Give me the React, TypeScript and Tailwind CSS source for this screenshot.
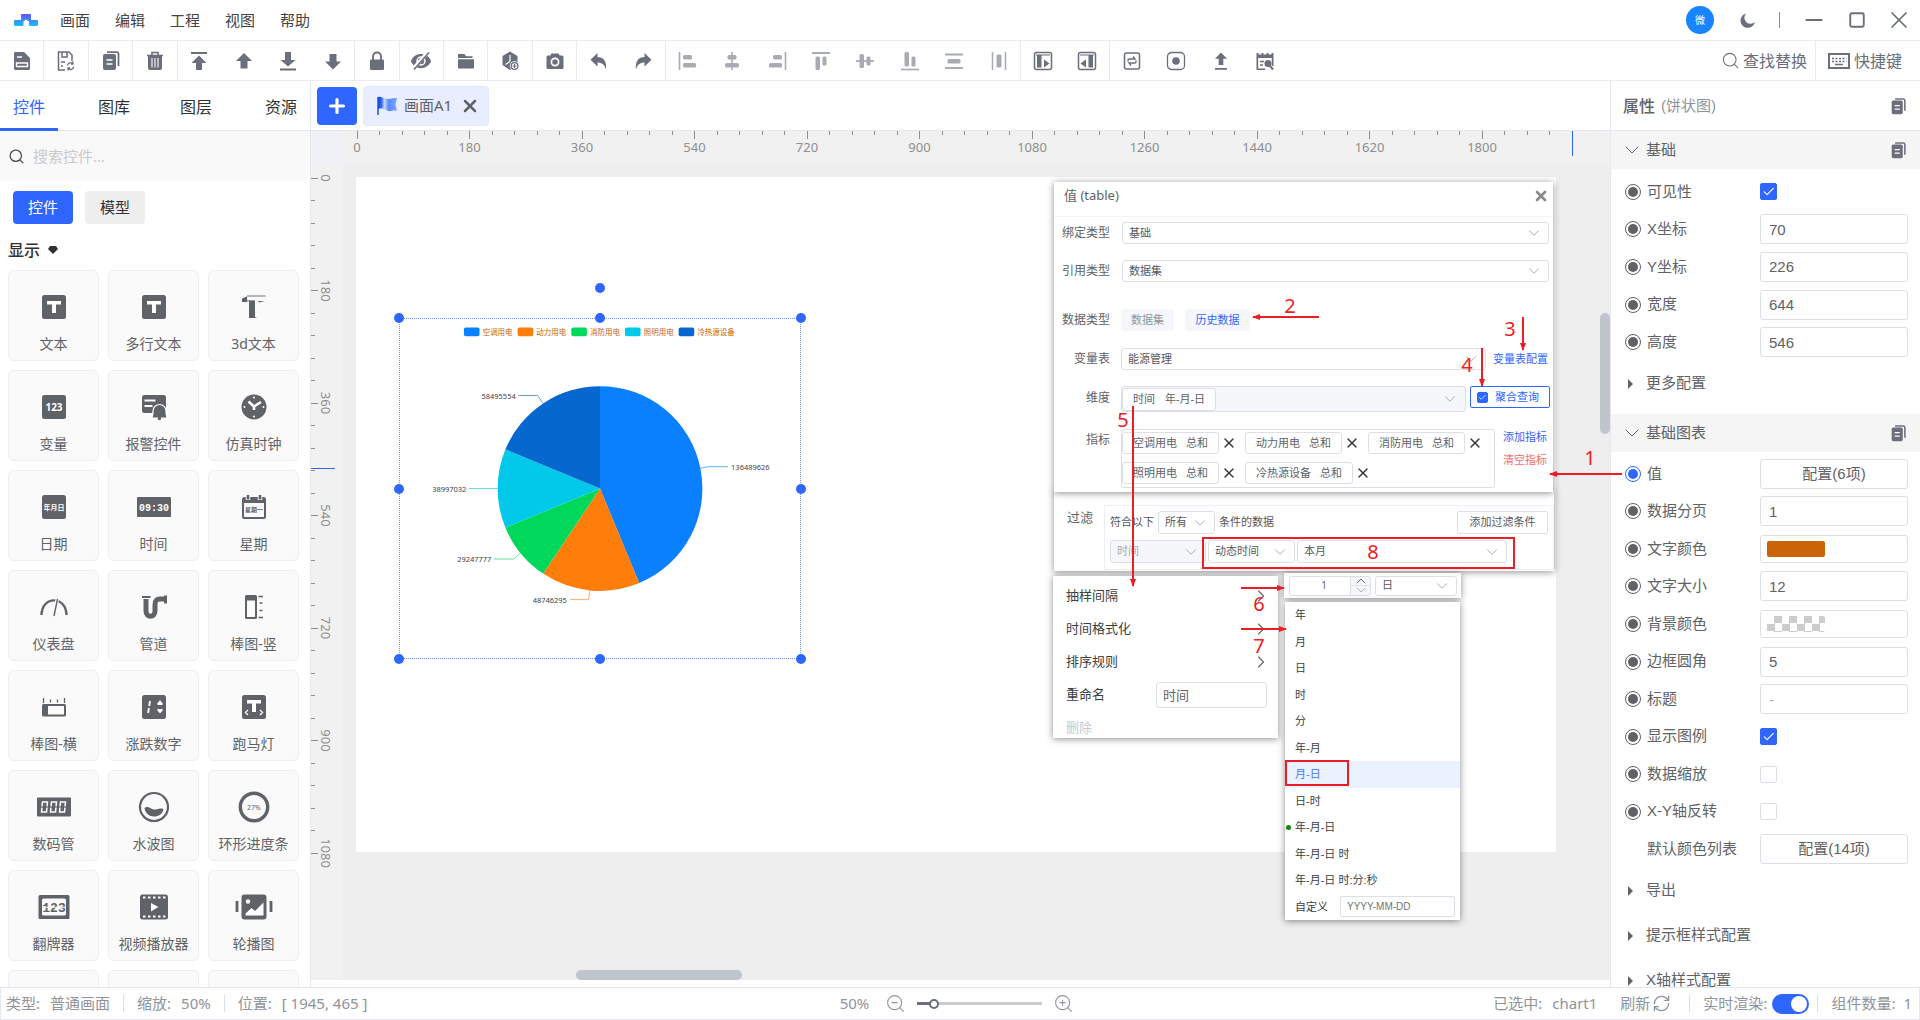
import type { ReactNode } from "react";
import { ChevronDown, ChevronRight, ChevronUp, Check, Minus, Plus, RefreshCw, Search, Square, X, ZoomIn, ZoomOut } from "lucide-react";

const MENUS = ["画面", "编辑", "工程", "视图", "帮助"];

interface Tool {
  name: string;
  icon: ReactNode;
  divider?: boolean;
  dim?: boolean;
}

const copyShape = (
  <>
    <path d="M6 1.2h9.5a2 2 0 0 1 2 2V15" fill="none" stroke="currentColor" strokeWidth="1.8" />
    <rect x="2" y="3" width="13" height="16" rx="2" />
    <path d="M5.500 9h6M5.500 13h6" stroke="#fff" strokeWidth="1.4" />
  </>
);

const TOOLS: Tool[] = [
  {
    name: "保存", divider: true,
    icon: <><path d="M3 1h9l6 6v10.5a1.5 1.5 0 0 1-1.5 1.5h-13A1.5 1.5 0 0 1 2 17.5V2a1 1 0 0 1 1-1z" /><path d="M5 6h5M4.500 12h11v3.500h-11z" stroke="#fff" strokeWidth="1.4" fill="none" /></>,
  },
  {
    name: "另存", divider: true,
    icon: <><path d="M9 19H2.500V1H13l3 3v6M6 1v5h5V1M5 11h4M5 15h2" fill="none" stroke="currentColor" strokeWidth="1.5" /><path d="M11.500 14.500a3 3 0 0 1 5.500-1.500M17.500 15.500a3 3 0 0 1-5.500 1.700M17 10.500V13h-2M12 19.500V17h2" fill="none" stroke="currentColor" strokeWidth="1.3" /></>,
  },
  { name: "复制", divider: true, icon: copyShape },
  {
    name: "删除", divider: true,
    icon: <><path d="M2 4.500h16M7 4V1.500h6V4" fill="none" stroke="currentColor" strokeWidth="1.6" /><path d="M3 4.500h14V17a2 2 0 0 1-2 2H5a2 2 0 0 1-2-2z" /><path d="M7 7v9.500M10 7v9.500M13 7v9.500" stroke="#fff" strokeWidth="1.1" /></>,
  },
  { name: "置顶", icon: <path d="M2 1h16v2H2zM10 4.500l7.500 7.500H13v7H7v-7H2.500z" /> },
  { name: "上移", icon: <path d="M10 2l8 8h-4.500v7.500h-7V10H2z" /> },
  { name: "置底", icon: <path d="M2 17.500h16v2H2zM10 15.500L2.500 9H7V1h6v8h4.500z" /> },
  { name: "下移", divider: true, icon: <path d="M10 18.500l-8-8h4.500V3h7v7.500H18z" /> },
  {
    name: "锁定", divider: true,
    icon: <><path d="M6 9V5.500a4 4 0 0 1 8 0V9" fill="none" stroke="currentColor" strokeWidth="1.9" /><rect x="3" y="8.500" width="14" height="10.500" rx="1.3" /></>,
  },
  {
    name: "隐藏", divider: true,
    icon: <><path d="M0 10C3 0.500 17 0.500 20 10 17 19.500 3 19.500 0 10z" /><circle cx="10" cy="10" r="4" fill="none" stroke="#fff" strokeWidth="1.5" /><path d="M2.500 17.500L17 1" stroke="#fff" strokeWidth="3.600" /><path d="M3 18.500L18 1.500" stroke="currentColor" strokeWidth="1.600" /></>,
  },
  { name: "文件夹", divider: true, icon: <path d="M2 3h6.500L10 5.300h6.500V7H2zM2 8.300h16v8.200a1 1 0 0 1-1 1H3a1 1 0 0 1-1-1z" /> },
  {
    name: "组件", divider: true,
    icon: <><path d="M10 0.500l7.500 4.500v9L10 19l-7.500-5V5z" /><path d="M10 4v6.500M10 10.500l-4.500 3" stroke="#fff" strokeWidth="1.2" /><circle cx="14.500" cy="15" r="4.800" fill="#fff" /><circle cx="14.500" cy="15" r="3.400" fill="none" stroke="currentColor" strokeWidth="1.3" /><path d="M14.500 13v4M12.500 15h4" stroke="currentColor" strokeWidth="1.2" /></>,
  },
  {
    name: "截图", divider: true,
    icon: <><path d="M6.500 2.500h7l1.200 2H17A1.500 1.500 0 0 1 18.500 6v10.500A1.500 1.500 0 0 1 17 18H3a1.500 1.500 0 0 1-1.500-1.500V6A1.500 1.500 0 0 1 3 4.500h2.300z" /><circle cx="10" cy="11" r="3.600" fill="none" stroke="#fff" strokeWidth="1.7" /></>,
  },
  { name: "撤销", icon: <path d="M8.500 2v4c6 0 9.500 4.500 8.500 12.500-1.500-5-4-7-8.500-7v4L1.500 8.700z" /> },
  { name: "重做", divider: true, icon: <path d="M11.500 2v4C5.500 6 2 10.500 3 18.500c1.500-5 4-7 8.500-7v4l7-6.800z" /> },
  { name: "左对齐", dim: true, icon: <><path d="M1.500 1v18" stroke="currentColor" strokeWidth="1.6" /><rect x="5" y="4" width="9" height="4.500" rx="1.5" /><rect x="5" y="12" width="13" height="4.500" rx="1.5" /></> },
  { name: "水平居中", dim: true, icon: <><path d="M10 1v18" stroke="currentColor" strokeWidth="1.6" /><rect x="5.500" y="4" width="9" height="4.500" rx="1.5" /><rect x="3" y="12" width="14" height="4.500" rx="1.5" /></> },
  { name: "右对齐", dim: true, icon: <><path d="M18.500 1v18" stroke="currentColor" strokeWidth="1.6" /><rect x="6" y="4" width="9" height="4.500" rx="1.5" /><rect x="2" y="12" width="13" height="4.500" rx="1.5" /></> },
  { name: "顶对齐", dim: true, icon: <><path d="M1 2h18" stroke="currentColor" strokeWidth="2" /><rect x="4.500" y="5.500" width="4.500" height="13.500" rx="1.5" /><rect x="11.500" y="5.500" width="4" height="9" rx="1.5" /></> },
  { name: "垂直居中", dim: true, icon: <><path d="M1 10h18" stroke="currentColor" strokeWidth="1.7" /><rect x="4.500" y="3" width="4.500" height="14" rx="1.5" /><rect x="11.500" y="5.500" width="4" height="9" rx="1.5" /></> },
  { name: "底对齐", dim: true, icon: <><path d="M1 18.500h18" stroke="currentColor" strokeWidth="1.7" /><rect x="4.500" y="1" width="4.500" height="14.500" rx="1.5" /><rect x="11.500" y="5.500" width="4" height="10" rx="1.5" /></> },
  { name: "垂直等距", dim: true, icon: <><path d="M1 3.500h18M1 17h18" stroke="currentColor" strokeWidth="1.8" /><rect x="3.500" y="8" width="13" height="4.500" rx="1.5" /></> },
  { name: "水平等距", dim: true, divider: true, icon: <><path d="M3.500 1v18M16.500 1v18" stroke="currentColor" strokeWidth="1.5" /><rect x="7.500" y="3.500" width="5" height="13" rx="1.5" /></> },
  { name: "左面板", icon: <><rect x="1.500" y="1.500" width="17" height="17" rx="2" fill="none" stroke="currentColor" strokeWidth="1.5" /><path d="M3 4h14" stroke="currentColor" /><path d="M4 4h4.500v12.500H4zM11 8.500l5.500 4-5.500 4z" /></> },
  { name: "右面板", divider: true, icon: <><rect x="1.500" y="1.500" width="17" height="17" rx="2" fill="none" stroke="currentColor" strokeWidth="1.5" /><path d="M3 4h14" stroke="currentColor" /><path d="M11.500 4H16v12.500h-4.500zM9 8.500l-5.500 4 5.500 4z" /></> },
  { name: "刷新页面", icon: <><rect x="2.500" y="2" width="15" height="16" rx="2" fill="none" stroke="currentColor" strokeWidth="1.5" /><path d="M6 10.500V9a1 1 0 0 1 1-1h6l-2-2.500M14 9.500V11a1 1 0 0 1-1 1H7l2 2.500" fill="none" stroke="currentColor" strokeWidth="1.4" /></> },
  { name: "录制", icon: <><rect x="1.500" y="1.500" width="17" height="17" rx="4" fill="none" stroke="currentColor" strokeWidth="1.3" /><circle cx="10" cy="10" r="3.800" /></> },
  { name: "上传", icon: <path d="M4 17h12v1.700H4zM10 1.500l6 6.300h-3.700V14H7.700V7.800H4z" /> },
  { name: "日志", icon: <><path d="M1.500 2h2v1.500h3V2h2v1.500h3V2h2v1.500h3V2h2v13h-1.700V7H3.200v10.500h7V19H1.500z" /><path d="M5 10.500h4M5 14h3" stroke="currentColor" strokeWidth="1.3" /><circle cx="13" cy="12.500" r="3.500" /><path d="M15 15l3 3.500" stroke="currentColor" strokeWidth="2" /></> },
];

const fg = "#5f6266";
const box = <rect x="8" y="4" width="24" height="24" rx="2.500" />;
const letterT = <path d="M13 10h14v3.500h-5V22h-4v-8.500h-5z" fill="#fff" />;

const WIDGETS: { name: string; icon: ReactNode }[] = [
  { name: "文本", icon: <>{box}{letterT}</> },
  { name: "多行文本", icon: <>{box}{letterT}</> },
  { name: "3d文本", icon: <><path d="M8 7.500l5-2V11H8zM15 10h6v16l2 1h-8z" /><path d="M13 5h18.500M13 9.800h8" stroke={fg} strokeWidth="0.900" fill="none" /><path d="M24 10h7l-6 1.500z" /></> },
  { name: "变量", icon: <>{box}<text x="20" y="19.500" fontSize="10" fontWeight="700" fill="#fff" textAnchor="middle">123</text></> },
  { name: "报警控件", icon: <><rect x="8" y="4" width="24" height="18" rx="2.500" /><path d="M10.500 9.500h11M10.500 15h8" stroke="#fff" strokeWidth="2" /><path d="M17.500 27c1.500-2 1.500-3 1.500-7a6.500 6.500 0 0 1 13 0c0 4 0 5 1.500 7z" stroke="#fff" strokeWidth="1.200" /><circle cx="25.500" cy="27.500" r="1.700" /></> },
  { name: "仿真时钟", icon: <><circle cx="20" cy="16" r="12.500" /><path d="M14.500 10.500l5.500 5 7-4.500M20 15v4" stroke="#fff" strokeWidth="2.600" fill="none" /><circle cx="20" cy="6.500" r="1" fill="#fff" /><circle cx="20" cy="25.500" r="1" fill="#fff" /><circle cx="10.500" cy="16" r="1" fill="#fff" /><circle cx="29.500" cy="16" r="1" fill="#fff" /></> },
  { name: "日期", icon: <>{box}<text x="20" y="18.500" fontSize="7" fontWeight="700" fill="#fff" textAnchor="middle">年月日</text></> },
  { name: "时间", icon: <><rect x="3" y="6" width="34" height="20" rx="1" /><text x="20" y="19.500" fontSize="10" fontWeight="700" fill="#fff" textAnchor="middle" fontFamily="Liberation Mono">09:30</text></> },
  { name: "星期", icon: <><rect x="8" y="6" width="24" height="22" rx="2.500" /><path d="M10 12h20v14H10z" fill="#fafafa" /><path d="M14 3v6M26 3v6" stroke="#fafafa" strokeWidth="4.500" /><path d="M14 4v4.500M26 4v4.500" stroke={fg} strokeWidth="2.600" /><text x="20" y="20.500" fontSize="6" fontWeight="700" textAnchor="middle">星期一</text></> },
  { name: "仪表盘", icon: <><path d="M7.500 24C8 4.500 32 4.500 32.500 24" fill="none" stroke={fg} strokeWidth="2.400" /><path d="M23.500 7L20 24.500" stroke="#fafafa" strokeWidth="3.500" /><path d="M23.500 8L20 25" stroke={fg} strokeWidth="1.400" /></> },
  { name: "管道", icon: <><path d="M12 8v12c0 7 9 7 9 0v-6c0-4 1-6 5-6h4" fill="none" stroke={fg} strokeWidth="5" /><path d="M8 5h8.500v2H8zM30 4.500h3v8h-3z" /></> },
  { name: "棒图-竖", icon: <><rect x="11" y="4" width="12" height="24" rx="1.500" /><path d="M13 9.500h8V26h-8z" fill="#fafafa" /><path d="M24.500 5.500h4.500M25.500 12h3M25.500 19.500h3M24.500 26.500h4.500" stroke={fg} strokeWidth="1.600" /></> },
  { name: "棒图-横", icon: <><rect x="8" y="13" width="24" height="12.500" rx="1.500" /><path d="M14 15h16v8.500H14z" fill="#fafafa" /><path d="M9.500 7v5M16.500 8.500v3M23.500 8.500v3M30.500 7v5" stroke={fg} strokeWidth="1.300" /></> },
  { name: "涨跌数字", icon: <>{box}<path d="M16 10l-.8 5M14.900 17l-.8 5" stroke="#fff" strokeWidth="1.900" /><path d="M26 9l3 4-1 1h-4l-1-1zM26 22.500l-3-3.500 1-1h4l1 1z" fill="#fff" /></> },
  { name: "跑马灯", icon: <>{box}<path d="M13 9h14v3.500h-5V21h-4v-8.500h-5z" fill="#fff" /><path d="M14 19l-2.500 2.500L14 24M26 19l2.500 2.500L26 24" stroke="#fff" strokeWidth="1.300" fill="none" /></> },
  { name: "数码管", icon: <><rect x="3" y="6.500" width="34" height="19" rx="1" /><g fill="none" stroke="#fff" strokeWidth="1.500"><path d="M8.500 11h5l-1 10h-5zM17.500 11h5l-1 10h-5zM26.500 11h5l-1 10h-5z" /></g><path d="M6 16h28" stroke={fg} strokeWidth="1.200" /></> },
  { name: "水波图", icon: <><circle cx="20" cy="16" r="14" fill="none" stroke={fg} strokeWidth="2.200" /><path d="M10.500 17c3-3 6.500 1 9.500 1.500s5-2 9.500-.5c-1 5.500-5 7.500-9.500 7.500s-9-3-9.500-8.500z" /></> },
  { name: "环形进度条", icon: <><circle cx="20" cy="16" r="13.700" fill="none" stroke={fg} strokeWidth="3.400" /><text x="20" y="18.500" fontSize="7" textAnchor="middle">27%</text></> },
  { name: "翻牌器", icon: <><rect x="4.500" y="4" width="31" height="24" rx="1.500" /><rect x="8" y="7.500" width="24" height="17" rx="1.500" fill="#fafafa" /><text x="20" y="21" fontSize="13" fontWeight="700" textAnchor="middle" fontFamily="Liberation Mono">123</text><path d="M8 16.300h24" stroke="#fafafa" /></> },
  { name: "视频播放器", icon: <><rect x="6" y="3.500" width="28" height="25" rx="2.500" /><path d="M9 6.500h23M9 25.500h23" stroke="#fff" strokeWidth="2" strokeDasharray="2.500 2.500" /><path d="M17 12l7.500 4-7.500 4.500z" fill="#fff" /></> },
  { name: "轮播图", icon: <><rect x="7.500" y="3.500" width="25" height="25" rx="3" /><circle cx="14" cy="10.500" r="2.200" fill="#fff" /><path d="M11.500 24.500v-2l6-5.500 3.500 3 8.500-8.500v13z" fill="#fff" /><path d="M3 10v11M37 10v11" stroke={fg} strokeWidth="2.800" /></> },
  { name: "", icon: null },
  { name: "", icon: null },
  { name: "", icon: null },
];

function ToolIcon({ children, className = "size-5" }: { children: ReactNode; className?: string }) {
  return <svg viewBox="0 0 20 20" fill="currentColor" className={className} aria-hidden="true">{children}</svg>;
}

function TitleBar() {
  return (
    <header className="flex h-[41px] shrink-0 items-center border-b border-[#ebebeb] pr-[7px] pl-3.5">
      <svg viewBox="0 0 24 12" className="mr-[22px] h-3 w-6">
        <defs>
          <linearGradient id="logo" x1="0" y1="0" x2="0" y2="1">
            <stop offset="0" stopColor="#6a4dff" />
            <stop offset="1" stopColor="#12c2ff" />
          </linearGradient>
        </defs>
        <path d="M7 1a1 1 0 0 1 1-1h8a1 1 0 0 1 1 1v5h6a1 1 0 0 1 1 1v4a1 1 0 0 1-1 1h-7a1 1 0 0 1-1-1V7h-1.500a1.500 1.500 0 0 0-3 0H9.500v4a1 1 0 0 1-1 1H1a1 1 0 0 1-1-1V7a1 1 0 0 1 1-1h6z" fill="url(#logo)" />
      </svg>
      <nav className="flex gap-[25px] text-[15px] text-[#444]">
        {MENUS.map((m) => <button key={m} type="button">{m}</button>)}
      </nav>
      <div className="ml-auto flex items-center text-[#6b6e7b]">
        <span className="flex size-7 items-center justify-center rounded-full bg-[#1885ff] text-[10px] text-white">微</span>
        <button type="button" aria-label="深色模式" className="ml-[26px]">
          <svg viewBox="0 0 16 16" className="size-4" fill="currentColor"><path d="M6 1.500a6 6 0 0 0 9 8.300A7.300 7.300 0 1 1 6 1.500z" /></svg>
        </button>
        <span className="mr-[21px] ml-[23px] h-4 w-px bg-[#8a8c94]" />
        <button type="button" aria-label="最小化"><Minus className="size-[26px]" strokeWidth={1.8} /></button>
        <button type="button" aria-label="最大化" className="ml-[21px]"><Square className="size-[18px]" strokeWidth={2.5} /></button>
        <button type="button" aria-label="关闭" className="ml-[19px]"><X className="size-7" strokeWidth={1.5} /></button>
      </div>
    </header>
  );
}

function Toolbar() {
  return (
    <div className="flex h-10 shrink-0 items-stretch border-b border-[#ebebeb] text-[#6b6e7b]">
      <div className="flex w-[1288px]">
        {TOOLS.map((t) => (
          <button
            key={t.name}
            type="button"
            aria-label={t.name}
            className={`flex flex-1 items-center justify-center border-r ${t.divider ? "border-[#ebebeb]" : "border-transparent"} ${t.dim ? "text-[#a9abb3]" : ""}`}
          >
            <ToolIcon>{t.icon}</ToolIcon>
          </button>
        ))}
      </div>
      <div className="ml-auto flex text-base">
        <button type="button" className="flex items-center gap-[3px] border-r border-[#ebebeb] pr-2">
          <Search className="size-[19px]" strokeWidth={1.4} />查找替换
        </button>
        <button type="button" className="flex items-center gap-1 pr-[18px] pl-3">
          <svg viewBox="0 0 22 16" className="h-4 w-[22px]" fill="none" stroke="currentColor">
            <rect x="1" y="1" width="20" height="14" strokeWidth="2" />
            <path d="M4 5.500h14.500M4 8.500h14.500" strokeWidth="1.5" strokeDasharray="2 1.5" />
            <path d="M7 11.500h8" strokeWidth="1.5" />
          </svg>
          快捷键
        </button>
      </div>
    </div>
  );
}

function Sidebar() {
  return (
    <aside className="flex w-[311px] shrink-0 flex-col overflow-hidden border-r border-[#e4e7ed]">
      <div className="flex h-[50px] shrink-0 border-b border-[#e4e7ed] text-base text-[#303133]">
        <button type="button" className="-mb-px w-[58px] border-b-3 border-[#2f66ff] pt-1 text-[#2f66ff]">控件</button>
        <button type="button" className="ml-10 pt-0.5">图库</button>
        <button type="button" className="ml-[50px] pt-0.5">图层</button>
        <button type="button" className="ml-[53px] pt-0.5">资源</button>
      </div>
      <label className="flex h-[50px] shrink-0 items-center gap-2 bg-[#f9f9f9] pl-2">
        <Search className="size-[17px] text-[#444]" strokeWidth={1.7} />
        <input type="text" placeholder="搜索控件..." className="min-w-0 flex-1 text-[15px] outline-none placeholder:text-[#c8c9cc]" />
      </label>
      <div className="mt-2.5 flex shrink-0 gap-3 pl-[13px] text-[15px]">
        <button type="button" className="h-[33px] w-[60px] rounded bg-[#2f66ff] text-white">控件</button>
        <button type="button" className="h-[33px] w-[60px] rounded bg-[#eee] text-[#303133]">模型</button>
      </div>
      <button type="button" className="mt-3.5 flex h-6 shrink-0 items-center gap-2 pl-2 text-base font-medium text-[#303133]">
        显示
        <svg viewBox="0 0 10 8" className="h-2 w-2.5" fill="currentColor"><path d="M2 0h6l2 3-5 5-5-5z" /></svg>
      </button>
      <div className="mt-2 grid grid-cols-[91px_91px_91px] gap-[9px] pl-2">
        {WIDGETS.map((w, i) => (
          <button key={i} type="button" className="flex h-[91px] flex-col items-center rounded-md border border-[#eee] bg-[#fafafa] pt-5">
            <svg viewBox="0 0 40 32" className="h-8 w-10" fill={fg}>{w.icon}</svg>
            <span className="mt-[11px] text-sm leading-5 whitespace-nowrap text-[#5f6266]">{w.name}</span>
          </button>
        ))}
      </div>
    </aside>
  );
}

function Select({ id, label, value, className = "", dim = false }: { id?: string; label?: string; value: string; className?: string; dim?: boolean }) {
  return (
    <div className={`relative ${className}`}>
      <select
        id={id}
        aria-label={label}
        defaultValue={value}
        className={`block size-full appearance-none rounded-[3px] border border-[#dcdfe6] pl-1.5 text-[11px] outline-none ${dim ? "bg-[#f5f7fa] text-[#a8abb2]" : "bg-white text-[#55585e]"}`}
      >
        <option>{value}</option>
      </select>
      <ChevronDown className="pointer-events-none absolute top-1/2 right-1.5 size-[18px] -translate-y-1/2 text-[#a8abb2]" strokeWidth={1.3} />
    </div>
  );
}

function Checkbox({ id, checked = false, className = "size-[17px]" }: { id: string; checked?: boolean; className?: string }) {
  return (
    <span className={`relative inline-block ${className}`}>
      <input id={id} type="checkbox" defaultChecked={checked} className="block size-full appearance-none rounded-xs border border-[#dcdfe6] checked:border-[#2f66ff] checked:bg-[#2f66ff]" />
      {checked && <Check className="pointer-events-none absolute inset-0 m-auto size-4/5 text-white" strokeWidth={2} />}
    </span>
  );
}

const TICKS_X = Array.from({ length: 54 }, (_, i) => i);
const TICKS_Y = Array.from({ length: 31 }, (_, i) => i);

function TopRuler() {
  return (
    <svg className="h-[33px] min-w-0 flex-1 bg-[#f1f1f1]" shapeRendering="crispEdges">
      {TICKS_X.map((i) => (
        <g key={i}>
          <line x1={14 + i * 22.5} x2={14 + i * 22.5} y1="0" y2={i % 5 ? 4 : 8} stroke="#8e8e8e" />
          {i % 5 === 0 && <text x={14 + i * 22.5} y="21" fontSize="13" fill="#8e8e8e" textAnchor="middle">{i * 36}</text>}
        </g>
      ))}
      <line x1="1229.5" x2="1229.5" y1="0" y2="25" stroke="#2f66ff" />
    </svg>
  );
}

function LeftRuler() {
  return (
    <svg className="h-full w-8 shrink-0 bg-[#f1f1f1]" shapeRendering="crispEdges">
      {TICKS_Y.map((i) => (
        <g key={i}>
          <line y1={14 + i * 22.5} y2={14 + i * 22.5} x1="0" x2={i % 5 ? 4 : 7} stroke="#8e8e8e" />
          {i % 5 === 0 && (
            <text transform={`translate(10 ${14 + i * 22.5}) rotate(90)`} fontSize="13" fill="#8e8e8e" textAnchor="middle">{i * 36}</text>
          )}
        </g>
      ))}
      <line x1="0" x2="24" y1="304.5" y2="304.5" stroke="#2f66ff" />
    </svg>
  );
}

const SERIES = [
  { name: "空调用电", value: 136489626, color: "#0a80ff", line: "480,241 496,238 527,238", x: 532, y: 238, anchor: "start" as const },
  { name: "动力用电", value: 48746295, color: "#ff7d0a", line: "305,436 304,451 274,451", x: 269, y: 451, anchor: "end" as const },
  { name: "消防用电", value: 29247777, color: "#00d85c", line: "195,376 184,386 152,386", x: 148, y: 386, anchor: "end" as const },
  { name: "照明用电", value: 38997032, color: "#02c9ea", line: "158,273 112,273", x: 108, y: 273, anchor: "end" as const },
  { name: "冷热源设备", value: 58495554, color: "#0667cf", line: "231,137 222,124 191,124", x: 187, y: 124, anchor: "end" as const },
];

function PieChart() {
  const total = SERIES.reduce((s, d) => s + d.value, 0);
  const r = 164;
  let start = 0;
  const point = (f: number) => `${322 + r * Math.sin(f * 2 * Math.PI)} ${273 - r * Math.cos(f * 2 * Math.PI)}`;
  return (
    <svg viewBox="0 0 644 546" className="size-full">
      {SERIES.map((d, i) => {
        const end = start + d.value / total;
        const path = `M322 273L${point(start)}A${r} ${r} 0 0 1 ${point(end)}Z`;
        start = end;
        return (
          <g key={d.name}>
            <rect x={104 + i * 86} y="15" width="25" height="14" rx="3" fill={d.color} />
            <text x={134 + i * 86} y="27" fontSize="12" fill="#cb6406">{d.name}</text>
            <path d={path} fill={d.color} />
            <polyline points={d.line} fill="none" stroke={d.color} strokeWidth="1" />
            <text x={d.x} y={d.y + 5} fontSize="12" fill="#444" textAnchor={d.anchor}>{d.value}</text>
          </g>
        );
      })}
    </svg>
  );
}

const HANDLES = [
  "left-1/2 -top-[30px]",
  "left-0 top-0", "left-1/2 top-0", "left-full top-0",
  "left-0 top-1/2", "left-full top-1/2",
  "left-0 top-full", "left-1/2 top-full", "left-full top-full",
];

function SelectedChart() {
  return (
    <div className="absolute top-[141px] left-[43px] h-[341px] w-[402px] outline-1 -outline-offset-1 outline-[#6f93f5] outline-dotted">
      <PieChart />
      {HANDLES.map((pos) => <span key={pos} className={`absolute size-2.5 -translate-1/2 rounded-full bg-[#2f66ff] ${pos}`} />)}
    </div>
  );
}

const METRICS = ["空调用电", "动力用电", "消防用电", "照明用电", "冷热源设备"];
const panelShadow = "shadow-[0_1px_7px_rgba(0,0,0,0.45)]";

function ValueDialog() {
  return (
    <section className={`absolute top-[5px] left-[698px] h-[310px] w-[499px] bg-white text-xs text-[#606266] ${panelShadow}`}>
      <div className="flex h-[35px] items-center justify-between border-b border-[#f4f4f4] pr-1 pb-1.5 pl-2.5">
        <h2 className="text-[13px]">值 (table)</h2>
        <button type="button" aria-label="关闭对话框"><X className="size-4 text-[#8a8a8a]" strokeWidth={4} /></button>
      </div>
      <div className="mt-[5px] flex items-center gap-3 pr-1">
        <label htmlFor="bind" className="w-14 text-right">绑定类型</label>
        <Select id="bind" value="基础" className="h-[22px] flex-1" />
      </div>
      <div className="mt-4 flex items-center gap-3 pr-1">
        <label htmlFor="ref" className="w-14 text-right">引用类型</label>
        <Select id="ref" value="数据集" className="h-[22px] flex-1" />
      </div>
      <div className="mt-[27px] flex items-center">
        <span className="w-14 text-right">数据类型</span>
        <button type="button" className="ml-[11px] h-[22px] w-[53px] rounded-xs bg-[#f5f7fa] text-[11px] text-[#909399]">数据集</button>
        <button type="button" className="ml-[11px] h-[22px] w-[65px] rounded-xs bg-[#f5f7fa] text-[11px] text-[#2f66ff]">历史数据</button>
      </div>
      <div className="mt-[17px] flex items-center">
        <label htmlFor="vars" className="mr-[11px] w-14 text-right">变量表</label>
        <Select id="vars" value="能源管理" className="h-[22px] w-[365px]" />
        <a href="#vars" className="ml-[7px] text-[11px] text-[#2f66ff]">变量表配置</a>
      </div>
      <div className="mt-4 flex">
        <span className="mr-[11px] w-14 text-right leading-6">维度</span>
        <div className="flex h-[26px] w-[345px] items-center rounded-[3px] border border-[#dcdfe6] bg-[#f5f7fa] pr-1.5">
          <button type="button" className="flex h-[23px] items-center gap-2.5 rounded-[3px] border border-[#dcdfe6] bg-white px-2.5 text-[11px]">
            <span>时间</span><span>年-月-日</span>
          </button>
          <ChevronDown className="ml-auto size-[18px] text-[#a8abb2]" strokeWidth={1.3} />
        </div>
        <label htmlFor="agg" className="ml-1 flex h-[22px] w-20 items-center gap-[7px] rounded-xs border border-[#2f66ff] pl-1.5 text-[11px] text-[#2f66ff]">
          <Checkbox id="agg" checked className="size-[11px]" />聚合查询
        </label>
      </div>
      <div className="mt-[17px] flex">
        <span className="mr-[11px] w-14 text-right leading-[22px]">指标</span>
        <div className="flex h-[59px] w-[374px] flex-wrap content-start gap-y-2 rounded-[3px] border border-[#dcdfe6] pt-0.5 text-[11px]">
          {METRICS.map((m) => (
            <span key={m} className="flex">
              <span className="flex h-[22px] items-center gap-[9px] rounded-[3px] border border-[#dcdfe6] px-2.5"><span>{m}</span><span>总和</span></span>
              <button type="button" aria-label={`移除${m}`} className="flex w-[26px] items-center justify-center pr-1.5"><X className="size-4 text-[#333]" strokeWidth={2} /></button>
            </span>
          ))}
        </div>
        <div className="ml-2 flex flex-col items-start gap-[7px] text-[11px] leading-4">
          <button type="button" className="text-[#2f66ff]">添加指标</button>
          <button type="button" className="text-[#f56c6c]">清空指标</button>
        </div>
      </div>
    </section>
  );
}

function FilterPanel() {
  return (
    <section className={`absolute top-[313px] left-[698px] flex h-[81px] w-[500px] bg-white pt-[15px] pl-[13px] text-[11px] text-[#55585e] ${panelShadow}`}>
      <span className="w-[37px] text-[13px] leading-6 text-[#606266]">过滤</span>
      <div className="h-[65px] flex-1 border border-[#ebeef5] p-[5px]">
        <div className="flex h-[23px] items-center">
          <span>符合以下</span>
          <Select label="匹配方式" value="所有" className="mx-1 h-[23px] w-[57px]" />
          <span>条件的数据</span>
          <button type="button" className="ml-auto h-[23px] w-[91px] rounded-xs border border-[#dcdfe6]">添加过滤条件</button>
        </div>
        <div className="mt-1.5 flex h-[23px]">
          <Select label="字段" value="时间" dim className="w-24" />
          <Select label="时间类型" value="动态时间" className="ml-0.5 w-[87px]" />
          <Select label="时间范围" value="本月" className="ml-0.5 w-[210px]" />
        </div>
      </div>
    </section>
  );
}

function DimensionMenu() {
  return (
    <section className={`absolute top-[399px] left-[697px] flex h-[162px] w-[225px] flex-col overflow-hidden bg-white pt-[3px] pr-[11px] pl-[13px] text-[13px] text-[#3c3e42] ${panelShadow}`}>
      {["抽样间隔", "时间格式化", "排序规则"].map((m) => (
        <button key={m} type="button" className="flex h-[33px] shrink-0 items-center justify-between">
          {m}<ChevronRight className="-mr-1 size-5 text-[#606266]" strokeWidth={1.3} />
        </button>
      ))}
      <div className="flex h-[33px] shrink-0 items-center justify-between">
        <label htmlFor="rename">重命名</label>
        <input id="rename" type="text" defaultValue="时间" className="h-[26px] w-[111px] rounded-[3px] border border-[#dcdfe6] px-1.5 text-[#606266]" />
      </div>
      <button type="button" className="flex h-[33px] shrink-0 items-center text-[#c8c9cc]">删除</button>
    </section>
  );
}

const FORMATS = ["年", "月", "日", "时", "分", "年-月", "月-日", "日-时", "年-月-日", "年-月-日 时", "年-月-日 时:分:秒"];

function FormatPanels() {
  return (
    <>
      <section className={`absolute top-[396px] left-[928px] flex h-[25px] w-[177px] items-center gap-1 bg-white pr-1 pl-[5px] ${panelShadow}`}>
        <div className="flex h-5 w-[82px] rounded-[3px] border border-[#dcdfe6] bg-[#f5f7fa]">
          <input type="text" aria-label="间隔" defaultValue="1" className="w-[61px] rounded-l-[3px] border-r border-[#dcdfe6] bg-white pl-2 text-center text-[10px] text-[#606266]" />
          <div className="flex flex-1 flex-col">
            <button type="button" aria-label="增加" className="flex h-[9px] items-center justify-center border-b border-[#dcdfe6]"><ChevronUp className="size-4 text-[#606266]" strokeWidth={1.4} /></button>
            <button type="button" aria-label="减少" className="flex h-[9px] items-center justify-center"><ChevronDown className="size-4 text-[#a8abb2]" strokeWidth={1.4} /></button>
          </div>
        </div>
        <Select label="间隔单位" value="日" className="h-5 w-[82px]" />
      </section>
      <section className={`absolute top-[425px] left-[929px] flex h-[318px] w-[175px] flex-col bg-white font-['Liberation_Sans','Noto_Sans_CJK_SC',sans-serif] text-[11px] text-[#3c3e42] ${panelShadow}`}>
        {FORMATS.map((f) => (
          <button key={f} type="button" className={`relative flex flex-1 items-center pl-2.5 whitespace-pre ${f === "月-日" ? "bg-[#ebf2ff] text-[#4a74f5]" : ""}`}>
            {f === "年-月-日" && <span className="absolute left-px size-[5px] rounded-full bg-[#0a8a0a]" />}
            {f}
          </button>
        ))}
        <div className="flex flex-1 items-center justify-between pr-[5px] pl-2.5">
          <label htmlFor="custom">自定义</label>
          <input id="custom" type="text" defaultValue="YYYY-MM-DD" className="h-[21px] w-[115px] rounded-xs border border-[#dcdfe6] px-1.5 text-[10px] text-[#707378]" />
        </div>
      </section>
    </>
  );
}

const ARROWS = [
  { n: 1, from: [1266, 297], to: [1194, 297], label: [1234, 288] },
  { n: 2, from: [963, 140], to: [897, 140], label: [934, 136] },
  { n: 3, from: [1167, 140], to: [1167, 173], label: [1154, 159] },
  { n: 4, from: [1126, 171], to: [1126, 209], label: [1111, 195] },
  { n: 5, from: [777, 229], to: [777, 409], label: [767, 250] },
  { n: 6, from: [885, 411], to: [928, 411], label: [903, 434] },
  { n: 7, from: [885, 452], to: [930, 452], label: [903, 476] },
];

function Annotations() {
  return (
    <svg className="pointer-events-none absolute top-0 left-0 h-[680px] w-[1280px]" fontSize="20" fill="#ee1c25" stroke="none">
      <defs>
        <marker id="tip" markerWidth="8" markerHeight="6" refX="7" refY="3" orient="auto" markerUnits="userSpaceOnUse">
          <path d="M0 0L8 3L0 6z" fill="#ee1c25" />
        </marker>
      </defs>
      {ARROWS.map((a) => (
        <g key={a.n}>
          <line x1={a.from[0]} y1={a.from[1]} x2={a.to[0]} y2={a.to[1]} stroke="#ee1c25" strokeWidth="2" markerEnd="url(#tip)" />
          <text x={a.label[0]} y={a.label[1]} textAnchor="middle">{a.n}</text>
        </g>
      ))}
      <text x="1017" y="382" textAnchor="middle">8</text>
      <rect x="847" y="361" width="311" height="30" fill="none" stroke="#ee1c25" strokeWidth="2" />
      <rect x="930" y="584" width="62" height="24" fill="none" stroke="#ee1c25" strokeWidth="2" />
    </svg>
  );
}

function Workspace() {
  return (
    <main className="relative z-10 flex min-w-0 flex-1 flex-col">
      <div className="flex h-[50px] shrink-0 items-center gap-1.5 border-b border-[#e4e7ed] pl-1.5">
        <button type="button" aria-label="新建画面" className="flex h-[38px] w-10 items-center justify-center rounded bg-[#2f66ff] text-white">
          <Plus className="size-[22px]" strokeWidth={3.5} />
        </button>
        <div className="flex h-10 items-center rounded border border-[#e4e9fb] bg-[#e8edff] pr-2 pl-[13px] text-[15px] text-[#606266]">
          <svg viewBox="0 0 21 20" className="mr-1.5 h-5 w-[21px]">
            <defs>
              <linearGradient id="flag" x1="0" x2="1">
                <stop offset="0" stopColor="#1c4fe0" /><stop offset="0.15" stopColor="#2258e8" />
                <stop offset="0.35" stopColor="#c9d9ff" /><stop offset="0.55" stopColor="#5b89ff" />
                <stop offset="1" stopColor="#7ea2ff" />
              </linearGradient>
            </defs>
            <path d="M1 1c3-1 6 2 10 2 3 0 5-1.500 9-1l-1.500 6.500L20 15c-3-1.500-6 1-9 0-4-1.500-6-4-10-2z" fill="url(#flag)" />
            <path d="M1 1v18" stroke="#1c4fe0" strokeWidth="1.500" />
          </svg>
          <button type="button">画面A1</button>
          <button type="button" aria-label="关闭画面" className="ml-2"><X className="size-5" strokeWidth={3} /></button>
        </div>
      </div>
      <div className="flex shrink-0">
        <div className="h-[33px] w-8 bg-[#f0f1f6]" />
        <TopRuler />
      </div>
      <div className="flex min-h-0 flex-1 pb-[7px]">
        <LeftRuler />
        <div className="relative min-w-0 flex-1 bg-[#eee]">
          <div className="absolute top-[13px] left-[13px] h-[675px] w-[1200px] bg-white">
            <SelectedChart />
            <FilterPanel />
            <ValueDialog />
            <DimensionMenu />
            <FormatPanels />
            <Annotations />
          </div>
          <span className="absolute bottom-0 left-[233px] h-2.5 w-[166px] rounded-full bg-[#c0c4cc]" />
          <span className="absolute top-[149px] right-0 h-[121px] w-2.5 rounded-full bg-[#c0c4cc]" />
        </div>
      </div>
    </main>
  );
}

type FieldKind = "text" | "check" | "button" | "color" | "checker";
interface Field {
  label: string;
  kind: FieldKind;
  value?: string;
  on?: boolean;
  bare?: boolean;
}

const BASIC: Field[] = [
  { label: "可见性", kind: "check", on: true },
  { label: "X坐标", kind: "text", value: "70" },
  { label: "Y坐标", kind: "text", value: "226" },
  { label: "宽度", kind: "text", value: "644" },
  { label: "高度", kind: "text", value: "546" },
];

const CHART: Field[] = [
  { label: "值", kind: "button", value: "配置(6项)", on: true },
  { label: "数据分页", kind: "text", value: "1" },
  { label: "文字颜色", kind: "color" },
  { label: "文字大小", kind: "text", value: "12" },
  { label: "背景颜色", kind: "checker" },
  { label: "边框圆角", kind: "text", value: "5" },
  { label: "标题", kind: "text" },
  { label: "显示图例", kind: "check", on: true },
  { label: "数据缩放", kind: "check" },
  { label: "X-Y轴反转", kind: "check" },
  { label: "默认颜色列表", kind: "button", value: "配置(14项)", bare: true },
];

function FieldRow({ field }: { field: Field }) {
  const { label, kind, value, on = false, bare = false } = field;
  const control = "w-[148px] rounded-[3px] border border-[#dcdfe6]";
  return (
    <div className="flex flex-1 items-center pr-3 pl-3.5">
      {bare ? (
        <span className="size-4" />
      ) : (
        <input
          type="radio"
          aria-label={`绑定${label}`}
          defaultChecked={kind === "button"}
          className="size-4 appearance-none rounded-full border border-[#606266] bg-[#606266] bg-clip-content p-0.5 checked:border-[#2f66ff] checked:bg-[#2f66ff]"
        />
      )}
      <label htmlFor={label} className="ml-1.5 w-[113px]">{label}</label>
      {kind === "text" && <input id={label} type="text" defaultValue={value} placeholder="-" className={`h-[30px] px-2 placeholder:text-[#a8abb2] ${control}`} />}
      {kind === "check" && <Checkbox id={label} checked={on} />}
      {kind === "button" && <button id={label} type="button" className={`h-[30px] ${control}`}>{value}</button>}
      {kind === "color" && (
        <button id={label} type="button" className={`flex h-7 items-center pl-1.5 ${control}`}>
          <span className="h-4 w-[58px] rounded-xs bg-[#cb6406]" />
        </button>
      )}
      {kind === "checker" && (
        <button id={label} type="button" className={`flex h-7 items-center pl-1.5 ${control}`}>
          <span className="h-4 w-[58px] rounded-xs bg-[conic-gradient(#ccc_25%,#fff_0_50%,#ccc_0_75%,#fff_0)] bg-size-[15px_15px]" />
        </button>
      )}
    </div>
  );
}

function SectionHead({ title }: { title: string }) {
  return (
    <div className="flex h-[38px] shrink-0 items-center bg-[#f5f5f5] pr-[13px] pl-[9px]">
      <ChevronDown className="size-6" strokeWidth={1} />
      <span className="ml-0.5">{title}</span>
      <button type="button" aria-label={`复制${title}`} className="ml-auto text-[#6b6e7b]"><ToolIcon className="size-[17px]">{copyShape}</ToolIcon></button>
    </div>
  );
}

function Collapsed({ title }: { title: string }) {
  return (
    <button type="button" className="flex h-[45px] w-full shrink-0 items-center pl-[17px]">
      <svg viewBox="0 0 5 10" className="mr-[13px] h-2.5 w-[5px]" fill="currentColor"><path d="M0 0l5 5-5 5z" /></svg>
      {title}
    </button>
  );
}

function PropertyPanel() {
  return (
    <aside className="flex w-[310px] shrink-0 flex-col overflow-hidden border-l border-[#e4e7ed] font-['Liberation_Sans','Noto_Sans_CJK_SC',sans-serif] text-[15px] text-[#606266]">
      <div className="flex h-[50px] shrink-0 items-center border-b border-[#e4e7ed] pt-0.5 pr-[13px] pl-3">
        <h2 className="text-base font-medium">属性</h2>
        <span className="ml-1.5 text-[#909399]">(饼状图)</span>
        <button type="button" aria-label="复制属性" className="ml-auto text-[#6b6e7b]"><ToolIcon className="size-[17px]">{copyShape}</ToolIcon></button>
      </div>
      <SectionHead title="基础" />
      <div className="mt-1 flex h-[188px] shrink-0 flex-col">
        {BASIC.map((f) => <FieldRow key={f.label} field={f} />)}
      </div>
      <Collapsed title="更多配置" />
      <div className="mt-2"><SectionHead title="基础图表" /></div>
      <div className="mt-[3px] flex h-[413px] shrink-0 flex-col">
        {CHART.map((f) => <FieldRow key={f.label} field={f} />)}
      </div>
      <Collapsed title="导出" />
      <Collapsed title="提示框样式配置" />
      <Collapsed title="X轴样式配置" />
    </aside>
  );
}

function Divider() {
  return <span className="h-[17px] w-px bg-[#dcdfe6]" />;
}

function StatusBar() {
  return (
    <footer className="grid h-[33px] shrink-0 grid-cols-[1fr_auto_1fr] items-center border border-[#e4e7ed] pr-[7px] pl-[5px] text-[15px] text-[#909399]">
      <div className="flex items-center gap-[13px]">
        <span className="flex gap-2.5"><span>类型:</span><span>普通画面</span></span>
        <Divider />
        <span className="flex gap-2.5"><span>缩放:</span><span>50%</span></span>
        <Divider />
        <span className="flex gap-2.5"><span>位置:</span><span>[ 1945, 465 ]</span></span>
      </div>
      <div className="flex items-center pr-1">
        <span>50%</span>
        <button type="button" aria-label="缩小" className="ml-4"><ZoomOut className="size-[21px]" strokeWidth={1.2} /></button>
        <input
          type="range"
          aria-label="缩放比例"
          defaultValue={10}
          className="mx-[11px] h-[3px] w-[125px] appearance-none bg-[linear-gradient(90deg,#6b6e7b_13%,#ccc_13%)] [&::-webkit-slider-thumb]:size-2.5 [&::-webkit-slider-thumb]:appearance-none [&::-webkit-slider-thumb]:rounded-full [&::-webkit-slider-thumb]:border-2 [&::-webkit-slider-thumb]:border-[#6b6e7b] [&::-webkit-slider-thumb]:bg-white"
        />
        <button type="button" aria-label="放大"><ZoomIn className="size-[21px]" strokeWidth={1.2} /></button>
      </div>
      <div className="flex items-center justify-end gap-[13px]">
        <span className="mr-2.5 flex gap-2.5"><span>已选中:</span><span>chart1</span></span>
        <button type="button" className="mr-[5px] flex items-center gap-0.5">刷新<RefreshCw className="size-[19px]" strokeWidth={1.6} /></button>
        <Divider />
        <label className="-mr-[5px] flex items-center gap-[5px]">
          实时渲染:
          <input type="checkbox" role="switch" defaultChecked className="h-5 w-[37px] appearance-none rounded-full bg-[#ccc] p-0.5 before:block before:size-4 before:rounded-full before:bg-white checked:bg-[#2f66ff] checked:before:ml-auto" />
        </label>
        <Divider />
        <span className="flex gap-2"><span>组件数量:</span><span>1</span></span>
      </div>
    </footer>
  );
}

export default function App() {
  return (
    <div className="flex h-screen flex-col overflow-hidden bg-white font-['Noto_Sans','Noto_Sans_CJK_SC',sans-serif]">
      <TitleBar />
      <Toolbar />
      <div className="flex min-h-0 flex-1">
        <Sidebar />
        <Workspace />
        <PropertyPanel />
      </div>
      <StatusBar />
    </div>
  );
}
